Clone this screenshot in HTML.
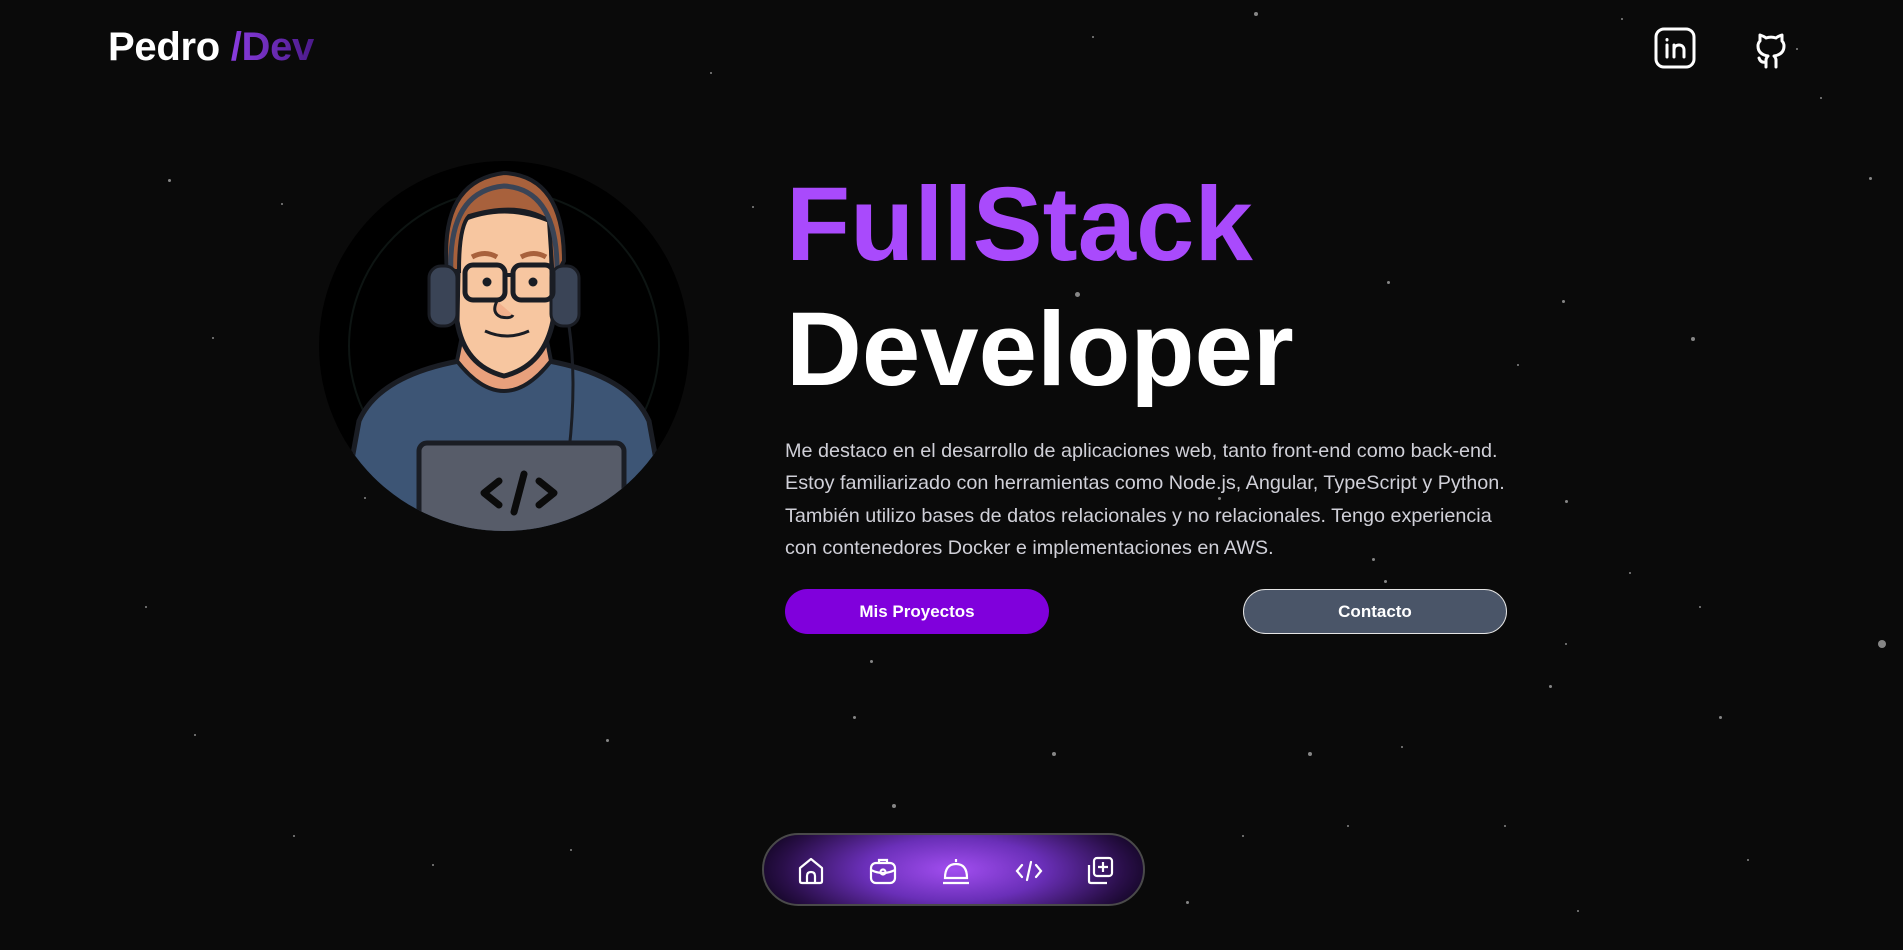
<!DOCTYPE html>
<html><head><meta charset="utf-8"><style>
*{margin:0;padding:0;box-sizing:border-box}
html,body{width:1903px;height:950px;overflow:hidden;background:#0a0a0a;font-family:"Liberation Sans",Arial,sans-serif}
.s{position:absolute;border-radius:50%;background:#bbb}
.logo{position:absolute;left:108px;top:25px;font-size:40px;font-weight:bold;color:#fff;letter-spacing:-0.3px}
.logo span{background:linear-gradient(90deg,#8a3ce0,#4b1a8a);-webkit-background-clip:text;color:transparent}
h1{position:absolute;left:786px;font-weight:bold;font-size:105px;line-height:1;white-space:nowrap}
p.d{position:absolute;left:785px;top:435px;color:#d0d0d8;font-size:19.8px;line-height:32.4px;white-space:nowrap}
.btn{position:absolute;top:589px;height:45px;width:264px;border-radius:23px;color:#fff;font-weight:bold;font-size:17px;display:flex;align-items:center;justify-content:center}
.nav{position:absolute;left:762px;top:833px;width:383px;height:73px;border-radius:37px;border:2px solid #4a4a4a;background:radial-gradient(ellipse 200px 70px at 50% 50%,#a24ef0 0%,#6a2fb8 45%,#2a0f4a 85%,#140626 100%)}
.nav svg{position:absolute;top:21px}
</style></head><body>
<div id="stars"></div>
<div class="logo">Pedro <span>/Dev</span></div>
<svg style="position:absolute;left:1654px;top:27px" width="42" height="42" viewBox="0 0 42 42" fill="none" stroke="#fff" stroke-width="3" stroke-linecap="round"><rect x="2" y="2" width="38" height="38" rx="8"/><path d="M13 18v12M13 12.5v.5M20 30v-12M20 23c0-3 2-5 5-5s5 2 5 5v7"/></svg>
<svg style="position:absolute;left:1750px;top:27px" width="42" height="42" viewBox="0 0 42 42" fill="none" stroke="#fff" stroke-width="3" stroke-linecap="round" stroke-linejoin="round"><path d="M16 40v-7c0-2 1-3 2-4-6-1-10-4-10-10 0-2 1-4 2-5 0-2 0-4 0-6 3 1 5 2 6 3 3-1 7-1 10 0 1-1 3-2 6-3 0 2 0 4 0 6 1 1 2 3 2 5 0 6-4 9-10 10 1 1 2 2 2 4v7M16 35c-4 1-6-1-7-4"/></svg>

<svg style="position:absolute;left:319px;top:161px" width="370" height="370" viewBox="0 0 370 370">
<defs><clipPath id="c"><circle cx="185" cy="185" r="185"/></clipPath></defs>
<circle cx="185" cy="185" r="185" fill="#000"/>
<circle cx="185" cy="185" r="155" fill="none" stroke="#0d1412" stroke-width="2"/>
<g clip-path="url(#c)">
<path d="M20 370 L40 260 Q60 215 140 200 L230 200 Q310 215 330 260 L350 370Z" fill="#3d5575" stroke="#1a1d24" stroke-width="5"/>
<path d="M138 200 Q185 260 232 200 L228 180 L142 180Z" fill="#e8a07c" stroke="#1a1d24" stroke-width="4"/>
<path d="M140 60 Q185 40 232 60 L234 160 Q225 205 185 215 Q145 205 138 160Z" fill="#f7c6a0" stroke="#1a1d24" stroke-width="5"/>
<path d="M128 110 Q120 20 185 12 Q245 15 245 100 L234 120 L230 60 Q200 40 150 55 Q140 65 140 110Z" fill="#a8613c" stroke="#1a1d24" stroke-width="4"/>
<path d="M132 115 Q128 30 185 25 Q240 28 238 115" fill="none" stroke="#3a4456" stroke-width="5"/>
<rect x="110" y="105" width="28" height="60" rx="12" fill="#3a4456" stroke="#1a1d24" stroke-width="3"/>
<rect x="232" y="105" width="28" height="60" rx="12" fill="#3a4456" stroke="#1a1d24" stroke-width="3"/>
<rect x="146" y="104" width="40" height="35" rx="8" fill="none" stroke="#1a1d24" stroke-width="5"/>
<rect x="194" y="104" width="40" height="35" rx="8" fill="none" stroke="#1a1d24" stroke-width="5"/>
<path d="M186 114h8" stroke="#1a1d24" stroke-width="4"/>
<circle cx="168" cy="121" r="4.5" fill="#1a1d24"/><circle cx="214" cy="121" r="4.5" fill="#1a1d24"/>
<path d="M153 96 q13-7 25 0M202 96 q13-7 25 0" stroke="#a8613c" stroke-width="5" fill="none"/>
<path d="M178 140 q-6 12 4 16 q10 2 12-2" stroke="#1a1d24" stroke-width="3" fill="#f2b08c"/>
<path d="M166 170 Q188 180 210 170" stroke="#1a1d24" stroke-width="3" fill="none"/>
<path d="M250 165 Q258 220 250 290" stroke="#1a1d24" stroke-width="3" fill="none"/>
<rect x="100" y="282" width="205" height="110" rx="8" fill="#575c69" stroke="#1a1d24" stroke-width="5"/>
<path d="M180 320 l-15 12 15 12M220 320 l15 12 -15 12M205 313 l-10 38" stroke="#0b0b0b" stroke-width="7" fill="none" stroke-linecap="round" stroke-linejoin="round"/>
</g></svg>

<h1 style="top:172px;color:#a94afc">FullStack</h1>
<h1 style="top:297px;color:#fff">Developer</h1>
<p class="d">Me destaco en el desarrollo de aplicaciones web, tanto front-end como back-end.<br>Estoy familiarizado con herramientas como Node.js, Angular, TypeScript y Python.<br>También utilizo bases de datos relacionales y no relacionales. Tengo experiencia<br>con contenedores Docker e implementaciones en AWS.</p>
<div class="btn" style="left:785px;background:#8000dc">Mis Proyectos</div>
<div class="btn" style="left:1243px;background:#4a5568;border:1px solid #e5e5e5">Contacto</div>

<div class="nav">
<svg style="left:33px" width="28" height="30" viewBox="0 0 28 30" fill="none" stroke="#fff" stroke-width="2.2" stroke-linejoin="round"><path d="M3 12 L14 3 L25 12 V25 Q25 27 23 27 H5 Q3 27 3 25Z"/><path d="M10 27 V20 Q10 16 14 16 Q18 16 18 20 V27"/></svg>
<svg style="left:104px" width="30" height="30" viewBox="0 0 30 30" fill="none" stroke="#fff" stroke-width="2.2"><path d="M11 7 V4 h8 v3"/><rect x="3" y="7" width="24" height="20" rx="5"/><path d="M3 14 Q15 20 27 14"/><circle cx="15" cy="16" r="2.5"/></svg>
<svg style="left:177px" width="30" height="30" viewBox="0 0 30 30" fill="none" stroke="#fff" stroke-width="2.2"><path d="M15 3 v3M4 22 Q4 8 15 8 Q26 8 26 22Z"/><path d="M2 27 h26"/></svg>
<svg style="left:250px" width="30" height="30" viewBox="0 0 30 30" fill="none" stroke="#fff" stroke-width="2.2" stroke-linecap="round"><path d="M8 9 l-5 6 5 6M22 9 l5 6 -5 6M17 6 l-4 18"/></svg>
<svg style="left:321px" width="30" height="30" viewBox="0 0 30 30" fill="none" stroke="#fff" stroke-width="2.2"><rect x="9" y="2" width="18" height="18" rx="3"/><path d="M18 6v10M13 11h10M4 9 v16 q0 2 2 2 h16"/></svg>
</div>
<script>
var st=[[1034,10,4],[1336,15,2],[1540,146,3],[1143,232,3],[1287,248,3],[886,241,5],[1394,278,4],[523,293,3],[1131,460,3],[1290,412,3],[1004,410,3],[1548,528,8],[717,544,3],[1078,620,4],[703,590,3],[867,620,4],[1417,590,3],[1277,565,3],[1141,478,3],[1343,472,2],[978,743,3],[735,663,4],[242,688,2],[500,609,3],[160,605,2],[139,148,3],[232,168,2],[175,278,2],[1440,708,2],[1024,688,2],[1160,508,2],[822,510,3],[1240,680,2],[356,712,2],[1250,300,2],[1500,80,2],[1400,500,2],[585,60,2],[900,30,2],[1290,530,2],[1155,615,2],[470,700,2],[620,170,2],[1110,680,2],[1300,750,2],[300,410,2],[120,500,2],[1480,40,2]];
var h='';for(var i=0;i<st.length;i++){var s=st[i];h+='<div class="s" style="left:'+(s[0]*1.2137|0)+'px;top:'+(s[1]*1.2137|0)+'px;width:'+s[2]+'px;height:'+s[2]+'px;opacity:.7"></div>'}
document.getElementById('stars').innerHTML=h;
</script>
</body></html>
